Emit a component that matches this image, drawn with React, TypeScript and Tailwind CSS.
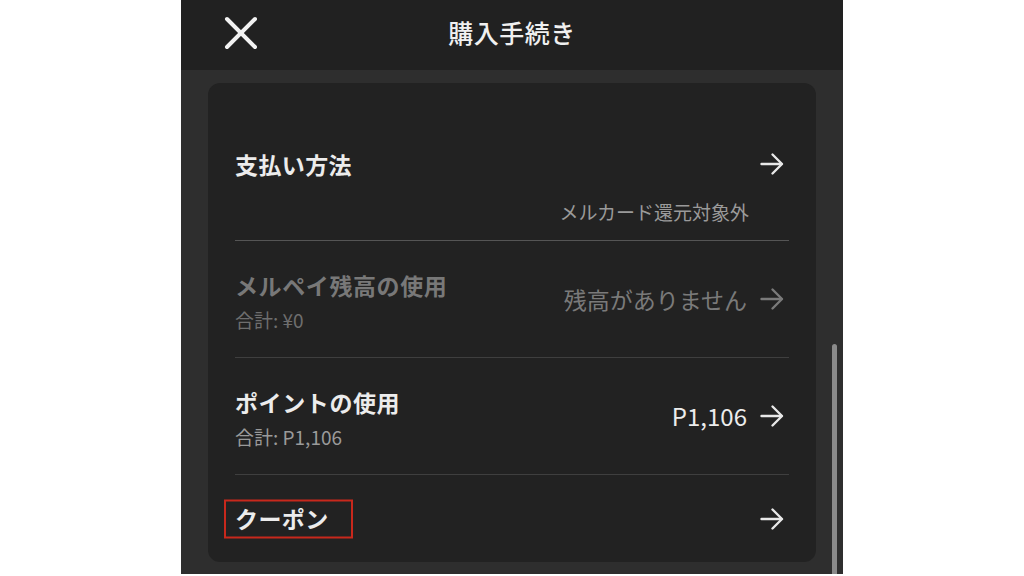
import React from "react";

const font = { fontFamily: '"Noto Sans CJK JP", "Noto Sans", sans-serif' };

function ArrowRight({ color = "#e8e8e8" }: { color?: string }) {
  return (
    <svg width="24" height="24" viewBox="0 0 24 24" fill="none" stroke={color} strokeWidth="2.4" strokeLinecap="round" strokeLinejoin="round">
      <path d="M1.5 12h20" />
      <path d="M12.5 2.5l9.5 9.5-9.5 9.5" />
    </svg>
  );
}

function CloseIcon() {
  return (
    <svg width="34" height="34" viewBox="0 0 34 34" fill="none" stroke="#f2f2f2" strokeWidth="4" strokeLinecap="round">
      <path d="M3 3l28 28" />
      <path d="M31 3L3 31" />
    </svg>
  );
}

export default function App() {
  return (
    <div className="w-full h-[576px] bg-white flex justify-center" style={font}>
      <div className="relative w-[662px] h-[574px] bg-[#2e2e2e] flex flex-col overflow-hidden">
        {/* header */}
        <div className="h-[70px] shrink-0 bg-[#212121] flex items-center relative">
          <div className="absolute left-[43px] top-[16px]">
            <CloseIcon />
          </div>
          <div className="w-full text-center text-[25px] font-medium text-[#f0f0f0] -mt-[4px] tracking-[0.5px]">
            購入手続き
          </div>
        </div>

        {/* body */}
        <div className="flex-1 px-[27px] pt-[13px]">
          <div className="bg-[#222222] rounded-[12px] h-[479px] px-[27px] flex flex-col">
            {/* 支払い方法 */}
            <div className="h-[158px] shrink-0 border-b border-[#555555] flex flex-col">
              <div className="flex items-center justify-between mt-[67px] h-[28px] pr-[5px]">
                <span className="text-[23px] font-bold text-[#ececec] tracking-[0.4px]">支払い方法</span>
                <ArrowRight />
              </div>
              <div className="text-right text-[19px] text-[#9a9a9a] mt-[21px] pr-[40px] leading-[26px]">
                メルカード還元対象外
              </div>
            </div>

            {/* メルペイ残高の使用 */}
            <div className="h-[117px] shrink-0 border-b border-[#3f3f3f] flex items-center justify-between pr-[5px]">
              <div className="flex flex-col pt-[3px]">
                <span className="text-[23px] font-bold text-[#787878] leading-[32px] tracking-[0.6px]">メルペイ残高の使用</span>
                <span className="text-[19px] text-[#6e6e6e] leading-[26px] mt-[6px]">合計: ¥0</span>
              </div>
              <div className="flex items-center gap-[13px]">
                <span className="text-[23px] text-[#7a7a7a]">残高がありません</span>
                <ArrowRight color="#7a7a7a" />
              </div>
            </div>

            {/* ポイントの使用 */}
            <div className="h-[117px] shrink-0 border-b border-[#3f3f3f] flex items-center justify-between pr-[5px]">
              <div className="flex flex-col pt-[3px]">
                <span className="text-[23px] font-bold text-[#ececec] leading-[32px] tracking-[0.6px]">ポイントの使用</span>
                <span className="text-[19px] text-[#9a9a9a] leading-[26px] mt-[6px]">合計: P1,106</span>
              </div>
              <div className="flex items-center gap-[13px]">
                <span className="text-[24px] text-[#ececec]">P1,106</span>
                <ArrowRight />
              </div>
            </div>

            {/* クーポン */}
            <div className="flex-1 flex items-center justify-between pr-[5px]">
              <span className="relative text-[23px] font-bold text-[#ececec] tracking-[0.4px]">
                クーポン
                <span className="absolute left-[-11px] top-1/2 -translate-y-1/2 w-[129px] h-[39px] border-2 border-[#c8281c]" />
              </span>
              <ArrowRight />
            </div>
          </div>
        </div>

        {/* scrollbar */}
        <div className="absolute right-[6px] top-[344px] w-[5px] h-[240px] rounded-full bg-[#8a8a8a]" />
      </div>
    </div>
  );
}
